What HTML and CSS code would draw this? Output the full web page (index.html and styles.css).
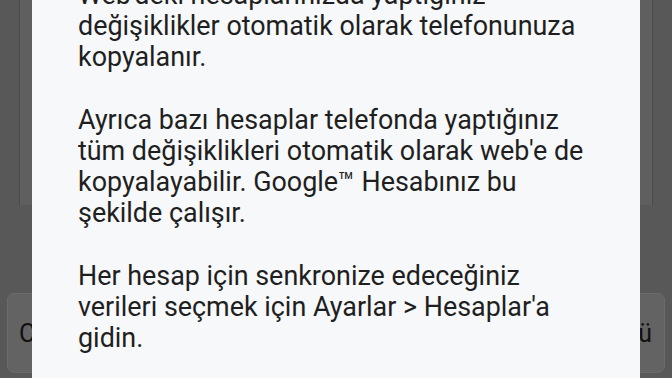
FILE: index.html
```html
<!DOCTYPE html>
<html lang="tr">
<head>
    <meta charset="UTF-8">
    <meta name="viewport" content="width=device-width, initial-scale=1.0">
    <title>Senkronizasyon</title>
    <link rel="stylesheet" href="styles.css">
</head>
<body>
    <div class="screen">
        <div class="panel"></div>
        <div class="keys">
            <div class="key key-left">C</div>
            <div class="key key-right">ü</div>
        </div>
    </div>

    <div class="dialog"> <!-- message dialog over the screen -->
        <p>Web'deki hesaplarınızda yaptığınız değişiklikler otomatik olarak telefonunuza kopyalanır.</p>
        <p>Ayrıca bazı hesaplar telefonda yaptığınız tüm değişiklikleri otomatik olarak web'e de kopyalayabilir. Google™ Hesabınız bu şekilde çalışır.</p>
        <p>Her hesap için senkronize edeceğiniz verileri seçmek için Ayarlar &gt; Hesaplar'a gidin.</p>
    </div>
</body>
</html>
```

FILE: styles.css
```css
body {
    margin: 0;
    height: 378px;
    overflow: hidden;
    background: #585858;
    font-family: Roboto, 'Noto Sans', sans-serif;
    position: relative;
}

.screen {
    display: flex;
    flex-direction: column;
    height: 100%;
}

.panel {
    height: 205px;
    margin: 0 19px;
    background: #5f5f5f;
    border-left: 1px solid #4b4b4b;
    border-right: 1px solid #4b4b4b;
}

.keys {
    display: flex;
    justify-content: space-between;
    padding: 0 7px;
    margin-top: 88px;
}

.key {
    width: 90px;
    height: 80px;
    box-sizing: border-box;
    background: #636363;
    border: 1px solid #6b6b6b;
    border-radius: 7px;
    display: flex;
    align-items: center;
    font-size: 25px;
    color: #111;
}

.key-left {
    padding-left: 11px;
}

.key-right {
    justify-content: flex-end;
    padding-right: 12px;
}

.dialog {
    position: absolute; /* dialog sits over the screen */
    left: 32px;
    top: -20px;
    bottom: 0;
    width: 608px;
    box-sizing: border-box;
    padding: 0 40px 0 46px;
    background: #f6f8f9;
    color: #1f1f1f;
    font-size: 26.9px;
    line-height: 31.2px;
}

.dialog p {
    margin: 0 0 31.2px;
}
```
